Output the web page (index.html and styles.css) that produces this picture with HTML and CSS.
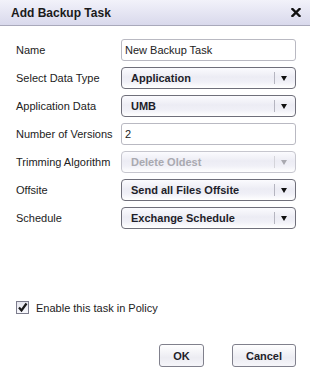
FILE: index.html
```html
<!DOCTYPE html>
<html lang="en">
<head>
    <meta charset="UTF-8">
    <title>Add Backup Task</title>
    <link rel="stylesheet" href="styles.css">
</head>
<body>
    <div class="dialog">
        <div class="dialog-header">
            <h2>Add Backup Task</h2>
            <svg class="close" width="10" height="9" viewBox="0 0 10 9">
                <path d="M1.5 1 L8.5 8 M8.5 1 L1.5 8" stroke="#111" stroke-width="2.4" stroke-linecap="square"/>
            </svg>
        </div>

        <div class="form">
            <div class="row">
                <label>Name</label>
                <div class="field text">New Backup Task</div>
            </div>
            <div class="row">
                <label>Select Data Type</label>
                <div class="field select">
                    <span class="value">Application</span>
                    <span class="arrow"></span>
                </div>
            </div>
            <div class="row">
                <label>Application Data</label>
                <div class="field select">
                    <span class="value">UMB</span>
                    <span class="arrow"></span>
                </div>
            </div>
            <div class="row">
                <label>Number of Versions</label>
                <div class="field text">2</div>
            </div>
            <div class="row">
                <label>Trimming Algorithm</label>
                <div class="field select disabled">
                    <span class="value">Delete Oldest</span>
                    <span class="arrow"></span>
                </div>
            </div>
            <div class="row">
                <label>Offsite</label>
                <div class="field select">
                    <span class="value">Send all Files Offsite</span>
                    <span class="arrow"></span>
                </div>
            </div>
            <div class="row">
                <label>Schedule</label>
                <div class="field select">
                    <span class="value">Exchange Schedule</span>
                    <span class="arrow"></span>
                </div>
            </div>
        </div>

        <div class="enable">
            <span class="checkbox">
                <svg width="11" height="11" viewBox="0 0 11 11">
                    <path d="M2 5.5 L4.5 8.5 L9.5 1.5" stroke="#1a1a1a" stroke-width="2.2" fill="none"/>
                </svg>
            </span>
            <span>Enable this task in Policy</span>
        </div>

        <div class="actions">
            <button class="btn-ok">OK</button>
            <button class="btn-cancel">Cancel</button>
        </div>
    </div>
</body>
</html>
```

FILE: styles.css
```css
* {
    margin: 0;
    padding: 0;
    box-sizing: border-box;
    font-family: "Liberation Sans", Arial, sans-serif;
}

body {
    background: #fff;
    width: 310px;
    height: 376px;
    overflow: hidden;
}

.dialog-header {
    height: 26px;
    display: flex;
    justify-content: space-between;
    align-items: center;
    padding: 0 9px 0 11px;
    background: linear-gradient(to bottom, #f2f2fa, #d9d9ec);
    border-bottom: 1px solid #a9a9bb;
}

.dialog-header h2 {
    font-size: 12px;
    font-weight: bold;
    color: #1a1a1a;
}

.form {
    margin-top: 13px;
    padding: 0 14px 0 16px;
    display: flex;
    flex-direction: column;
    gap: 6px;
}

.row {
    display: flex;
    align-items: center;
    height: 22px;
}

.row label {
    width: 105px;
    font-size: 11px;
    color: #222;
}

.field {
    width: 175px;
    height: 22px;
    display: flex;
    align-items: center;
    font-size: 11px;
}

.text {
    border: 1px solid #b9b9c2;
    border-radius: 3px;
    background: #fff;
    padding-left: 3px;
    color: #222;
}

.select {
    border: 1px solid #6f6f7a;
    border-radius: 4px;
    background: linear-gradient(to bottom, #fbfbfe 0%, #ececf4 45%, #f0f0f7 70%, #ffffff 100%);
    justify-content: space-between;
    padding-left: 9px;
    font-weight: bold;
    color: #1e1e2a;
}

.select .arrow {
    width: 21px;
    height: 12px;
    border-left: 1px solid #b5b5c0;
    position: relative;
}

.select .arrow::after {
    content: "";
    position: absolute;
    left: 6px;
    top: 4px;
    border-left: 3.5px solid transparent;
    border-right: 3.5px solid transparent;
    border-top: 5px solid #111;
}

.select.disabled {
    border-color: #c6c6ce;
    color: #a9a9b0;
}

.select.disabled .arrow {
    border-left-color: #d4d4da;
}

.select.disabled .arrow::after {
    border-top-color: #a9a9b0;
}

.enable {
    margin-top: 72px;
    padding-left: 16px;
    display: flex;
    align-items: center;
    gap: 7px;
    font-size: 11px;
    color: #222;
}

.checkbox {
    width: 13px;
    height: 13px;
    border: 1px solid #7c7c8c;
    background: linear-gradient(to bottom, #e6e6ee, #f8f8fc);
    display: flex;
    align-items: center;
    justify-content: center;
}

.actions {
    margin-top: 30px;
    padding-right: 14px;
    display: flex;
    justify-content: flex-end;
    gap: 28px;
}

.actions button {
    height: 23px;
    border: 1px solid #80808c;
    border-radius: 3px;
    background: linear-gradient(to bottom, #ffffff, #ececf2 60%, #f6f6fa);
    font-size: 11px;
    font-weight: bold;
    color: #1e1e2a;
}

.btn-ok {
    width: 45px;
}

.btn-cancel {
    width: 64px;
}
```
